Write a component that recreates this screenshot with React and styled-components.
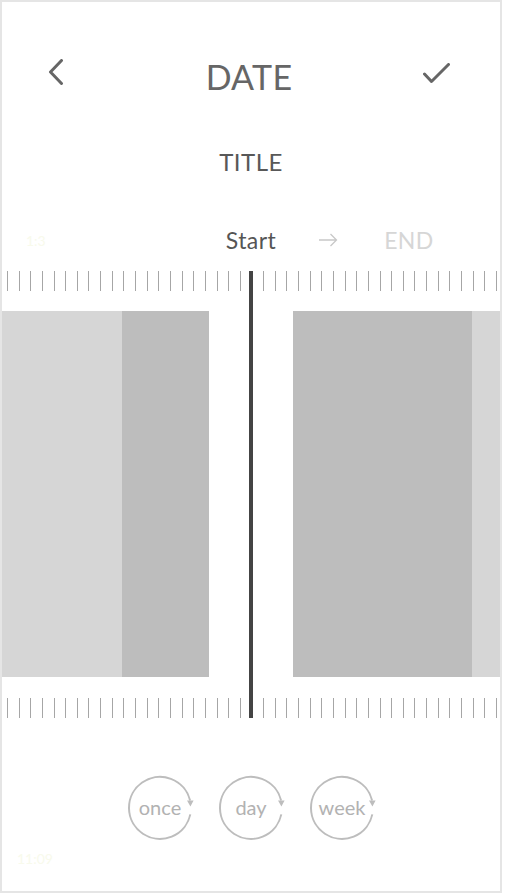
import styled, { createGlobalStyle } from "styled-components";

const GlobalStyle = createGlobalStyle`
  html, body {
    margin: 0;
    padding: 0;
    background: #ffffff;
  }
  body {
    font-family: Lato, "Open Sans", "Liberation Sans", sans-serif;
  }
`;

const TICKS = Array.from({ length: 43 });
const MODES = ["once", "day", "week"];

const Frame = styled.div`
  width: 502px;
  height: 893px;
  box-sizing: border-box;
  border: 2px solid #e5e5e5;
  display: flex;
  flex-direction: column;
  background: #fff;
`;

const Header = styled.div`
  display: grid;
  grid-template-columns: 1fr auto 1fr;
  align-items: start;
  margin-top: 55px;
  padding: 0 50px 0 46px;
  height: 40px;
`;

const IconButton = styled.button`
  border: 0;
  padding: 0;
  background: transparent;
  cursor: pointer;
  justify-self: ${(p) => (p.end ? "end" : "start")};
  margin-top: ${(p) => p.offset || 0}px;
  display: flex;
  svg {
    display: block;
  }
`;

const Heading = styled.h1`
  margin: 0;
  font-size: 34px;
  line-height: 40px;
  font-weight: 400;
  color: #666;
  letter-spacing: 0.3px;
`;

const Title = styled.h2`
  margin: 50px 0 0;
  font-size: 24px;
  line-height: 30px;
  font-weight: 400;
  color: #585858;
  text-align: center;
  letter-spacing: 0.5px;
`;

const Labels = styled.div`
  display: grid;
  grid-template-columns: 1fr auto 1fr;
  align-items: center;
  margin-top: 48px;
  height: 30px;
`;

const Faint = styled.span`
  justify-self: start;
  margin-left: ${(p) => p.indent}px;
  font-size: 14px;
  color: #f8faec;
`;

const Start = styled.span`
  font-size: 23px;
  line-height: 30px;
  color: #555;
  letter-spacing: 0.4px;
`;

const EndGroup = styled.div`
  display: flex;
  align-items: center;
  padding-left: 42px;
  gap: 46px;
  svg {
    display: block;
  }
`;

const End = styled.span`
  font-size: 23px;
  line-height: 30px;
  color: #d6d6d6;
  letter-spacing: 0.4px;
`;

const Track = styled.div`
  position: relative;
  margin-top: 16px;
  display: flex;
  flex-direction: column;
  gap: 20px;
`;

const Ruler = styled.div`
  height: 20px;
  display: flex;
  justify-content: space-between;
  padding: 0 3px 0 5px;
`;

const Tick = styled.span`
  width: 1px;
  height: 100%;
  background: #a6a6a6;
`;

const Blocks = styled.div`
  height: 366px;
  display: flex;
  margin-bottom: 1px;
`;

const Segment = styled.div`
  flex: 0 0 ${(p) => p.w}px;
  background: ${(p) =>
    p.tone === "light" ? "#d6d6d6" : p.tone === "dark" ? "#bdbdbd" : "#fff"};
`;

const Needle = styled.div`
  position: absolute;
  top: 0;
  bottom: 0;
  left: 247px;
  width: 4px;
  background: #444;
`;

const Modes = styled.div`
  display: flex;
  justify-content: center;
  gap: 23px;
  margin-top: 56px;
`;

const ModeButton = styled.button`
  position: relative;
  width: 68px;
  height: 68px;
  border: 0;
  padding: 0;
  background: transparent;
  display: flex;
  align-items: center;
  justify-content: center;
  font-family: inherit;
  font-size: 20px;
  color: #b2b2b2;
  cursor: pointer;
  svg {
    position: absolute;
    inset: 0;
  }
  span {
    position: relative;
    margin-top: -2px;
  }
`;

const Footer = styled.div`
  margin-top: 8px;
  height: 20px;
  display: flex;
`;

const BackIcon = () => (
  <svg width="16" height="26" viewBox="0 0 16 26">
    <polyline
      points="13.5,1.5 2.5,13 13.5,24.5"
      fill="none"
      stroke="#666"
      strokeWidth="3"
      strokeLinecap="round"
      strokeLinejoin="round"
    />
  </svg>
);

const CheckIcon = () => (
  <svg width="27" height="21" viewBox="0 0 27 21">
    <polyline
      points="1.5,11 8.5,18.5 25.5,1.5"
      fill="none"
      stroke="#666"
      strokeWidth="3"
      strokeLinecap="round"
      strokeLinejoin="round"
    />
  </svg>
);

const ArrowIcon = () => (
  <svg width="20" height="14" viewBox="0 0 20 14">
    <path
      d="M1 7 H18.5 M12.5 1 L18.5 7 L12.5 13"
      fill="none"
      stroke="#c8c8c8"
      strokeWidth="1.3"
    />
  </svg>
);

const RepeatRing = () => (
  <svg width="68" height="68" viewBox="0 0 68 68">
    <path
      d="M64.3 40.4 A31 31 0 1 1 64.1 26.5"
      fill="none"
      stroke="#bdbdbd"
      strokeWidth="2"
    />
    <polygon points="61,26.5 67.6,26.5 64.4,32.5" fill="#bdbdbd" />
  </svg>
);

const App = () => {
  return (
    <>
      <GlobalStyle />
      <Frame>
        <Header>
          <IconButton offset={2} aria-label="back">
            <BackIcon />
          </IconButton>
          <Heading>DATE</Heading>
          <IconButton end offset={6} aria-label="done">
            <CheckIcon />
          </IconButton>
        </Header>

        <Title>TITLE</Title>

        <Labels>
          <Faint indent={24}>1:3</Faint>
          <Start>Start</Start>
          <EndGroup>
            <ArrowIcon />
            <End>END</End>
          </EndGroup>
        </Labels>

        <Track>
          <Ruler>
            {TICKS.map((_, i) => (
              <Tick key={i} />
            ))}
          </Ruler>
          <Blocks>
            <Segment tone="light" w={120} />
            <Segment tone="dark" w={87} />
            <Segment w={84} />
            <Segment tone="dark" w={179} />
            <Segment tone="light" w={28} />
          </Blocks>
          <Ruler>
            {TICKS.map((_, i) => (
              <Tick key={i} />
            ))}
          </Ruler>
          <Needle />
        </Track>

        <Modes>
          {MODES.map((m) => (
            <ModeButton key={m}>
              <RepeatRing />
              <span>{m}</span>
            </ModeButton>
          ))}
        </Modes>

        <Footer>
          <Faint indent={15}>11:09</Faint>
        </Footer>
      </Frame>
    </>
  );
};

export default App;
